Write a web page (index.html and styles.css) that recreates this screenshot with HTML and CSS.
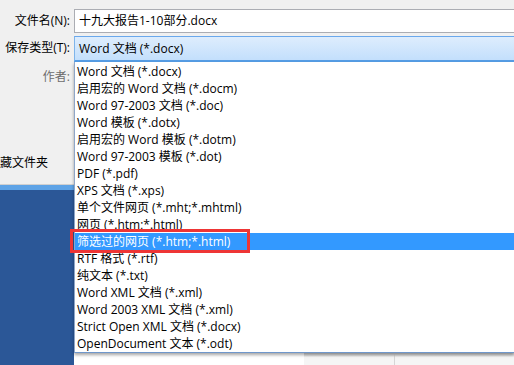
FILE: index.html
```html
<!DOCTYPE html>
<html lang="zh-CN">
<head>
<meta charset="utf-8">
<link rel="stylesheet" href="styles.css">
</head>
<body>
<div class="dialog">
  <div class="left">
    <div class="lbl lbl-name">文件名(N):</div>
    <div class="lbl lbl-type">保存类型(T):</div>
    <div class="lbl lbl-author">作者:</div>
    <div class="hide-folder">藏文件夹</div>
    <div class="blue-strip"></div>
    <div class="blue-panel"></div>
  </div>
  <div class="right">
    <div class="input">十九大报告1-10部分.docx</div>
    <div class="combo">Word 文档 (*.docx)</div>
    <ul class="list">
      <li>Word 文档 (*.docx)</li>
      <li>启用宏的 Word 文档 (*.docm)</li>
      <li>Word 97-2003 文档 (*.doc)</li>
      <li>Word 模板 (*.dotx)</li>
      <li>启用宏的 Word 模板 (*.dotm)</li>
      <li>Word 97-2003 模板 (*.dot)</li>
      <li>PDF (*.pdf)</li>
      <li>XPS 文档 (*.xps)</li>
      <li>单个文件网页 (*.mht;*.mhtml)</li>
      <li>网页 (*.htm;*.html)</li>
      <li class="sel">筛选过的网页 (*.htm;*.html)</li>
      <li>RTF 格式 (*.rtf)</li>
      <li>纯文本 (*.txt)</li>
      <li>Word XML 文档 (*.xml)</li>
      <li>Word 2003 XML 文档 (*.xml)</li>
      <li>Strict Open XML 文档 (*.docx)</li>
      <li>OpenDocument 文本 (*.odt)</li>
    </ul>
    <div class="bottom">
      <div class="bottom-white"></div>
      <div class="bottom-gray"><div class="cell"></div></div>
    </div>
  </div>
  <div class="redbox"></div>
</div>
</body>
</html>
```
FILE: styles.css
```css
html, body {
  margin: 0;
  padding: 0;
}
body {
  width: 514px;
  height: 365px;
  overflow: hidden;
  background: #f0f0f0;
  font-family: "Open Sans", "Noto Sans CJK SC", sans-serif;
  font-size: 12px;
  color: #000;
}
.dialog {
  position: relative;
  display: grid;
  grid-template-columns: 74px 1fr;
  height: 365px;
}
.left {
  display: flex;
  flex-direction: column;
}
.lbl {
  text-align: right;
  padding-right: 4px;
  white-space: nowrap;
  line-height: 17px;
}
.lbl-name {
  margin-top: 12px;
}
.lbl-type {
  margin-top: 10px;
}
.lbl-author {
  margin-top: 12px;
  color: #6d6d6d;
}
.hide-folder {
  margin-top: 69px;
  line-height: 17px;
  white-space: nowrap;
}
.blue-strip {
  margin-top: 13px;
  height: 5px;
  border-top: 1px solid #d0d0d0;
  background: #5ea3e6;
}
.blue-panel {
  flex: 1;
  background: #2b5797;
}
.right {
  display: flex;
  flex-direction: column;
  padding-top: 9px;
  min-width: 0;
}
.input {
  height: 22px;
  border: 1px solid #abadb3;
  border-right: none;
  background: #fff;
  padding-left: 4px;
  line-height: 22px;
  white-space: nowrap;
}
.combo {
  margin-top: 3px;
  height: 23px;
  border-top: 1px solid #6aa8ec;
  border-bottom: 2px solid #569de5;
  border-left: 1px solid #7eb4ea;
  background: linear-gradient(#deedfd, #c3dffc);
  padding-left: 4px;
  line-height: 23px;
  white-space: nowrap;
}
.list {
  list-style: none;
  margin: 0;
  padding: 1px 0 0 0;
  background: #fff;
  border-left: 1px solid #8fa6c8;
  border-bottom: 1px solid #6f97cb;
  box-shadow: 0 2px 3px rgba(0, 0, 0, 0.35);
  position: relative;
  z-index: 1;
}
.list li {
  height: 17px;
  line-height: 17px;
  padding-left: 2px;
  white-space: nowrap;
}
.list li.sel {
  background: #3399ff;
  color: #fff;
}
.bottom {
  flex: 1;
  display: flex;
  background: #fff;
}
.bottom-white {
  width: 230px;
}
.bottom-gray {
  flex: 1;
  background: linear-gradient(#d2d2d2, #e6e6e6 3px, #f5f5f5 4px);
  display: flex;
}
.cell {
  margin-left: 90px;
  border-left: 1px solid #d6d6d6;
}
.redbox {
  position: absolute;
  left: 70px;
  top: 229px;
  width: 174px;
  height: 18px;
  border: 3px solid #ee3535;
  z-index: 2;
}
```
